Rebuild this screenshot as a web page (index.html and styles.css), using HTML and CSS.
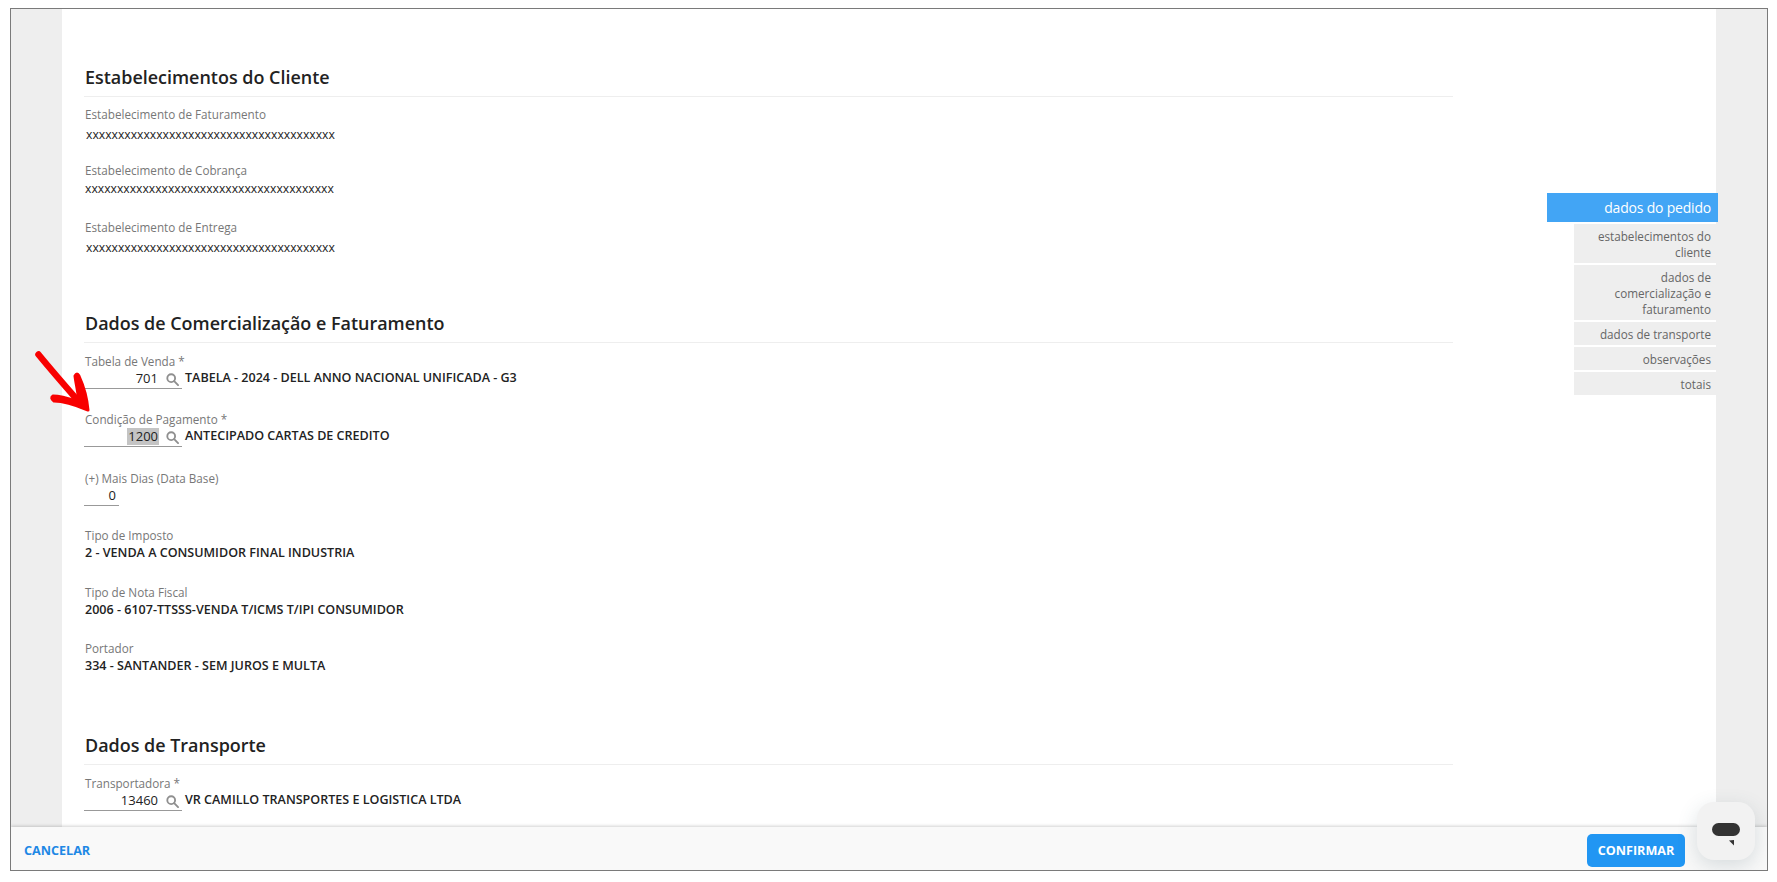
FILE: index.html
```html
<!DOCTYPE html>
<html lang="pt-BR">
<head>
<meta charset="utf-8">
<title>Dados do pedido</title>
<link rel="stylesheet" href="styles.css">
</head>
<body>
<div class="frame">
  <div class="scroller">
    <main class="sheet">
      <div class="content">
        <section class="sec sec-cliente">
          <h2 class="sec-title">Estabelecimentos do Cliente</h2>
          <div class="field f-est"><div class="lbl">Estabelecimento de Faturamento</div><div class="xval nudge">xxxxxxxxxxxxxxxxxxxxxxxxxxxxxxxxxxxxxxx</div></div>
          <div class="field f-est2"><div class="lbl">Estabelecimento de Cobrança</div><div class="xval">xxxxxxxxxxxxxxxxxxxxxxxxxxxxxxxxxxxxxxx</div></div>
          <div class="field f-est3"><div class="lbl">Estabelecimento de Entrega</div><div class="xval nudge">xxxxxxxxxxxxxxxxxxxxxxxxxxxxxxxxxxxxxxx</div></div>
        </section>
        <section class="sec sec-com">
          <h2 class="sec-title">Dados de Comercialização e Faturamento</h2>
          <div class="field f-lookup">
            <div class="lbl">Tabela de Venda *</div>
            <div class="lookup">
              <div class="inp"><span class="num">701</span><svg class="lens" viewBox="0 0 14 14"><circle cx="5.6" cy="5.6" r="4.2"/><path d="M8.8 8.8L13 13"/></svg></div>
              <span class="desc">TABELA - 2024 - DELL ANNO NACIONAL UNIFICADA - G3</span>
            </div>
          </div>
          <div class="field f-lookup2">
            <div class="lbl">Condição de Pagamento *</div>
            <div class="lookup">
              <div class="inp"><span class="num sel">1200</span><svg class="lens" viewBox="0 0 14 14"><circle cx="5.6" cy="5.6" r="4.2"/><path d="M8.8 8.8L13 13"/></svg></div>
              <span class="desc">ANTECIPADO CARTAS DE CREDITO</span>
            </div>
          </div>
          <div class="field f-lookup3">
            <div class="lbl">(+) Mais Dias (Data Base)</div>
            <div class="lookup"><div class="inp inp-short"><span class="num">0</span></div></div>
          </div>
          <div class="field f-ro f-ro1"><div class="lbl">Tipo de Imposto</div><div class="roval">2 - VENDA A CONSUMIDOR FINAL INDUSTRIA</div></div>
          <div class="field f-ro f-ro2"><div class="lbl">Tipo de Nota Fiscal</div><div class="roval">2006 - 6107-TTSSS-VENDA T/ICMS T/IPI CONSUMIDOR</div></div>
          <div class="field f-ro f-ro3"><div class="lbl">Portador</div><div class="roval">334 - SANTANDER - SEM JUROS E MULTA</div></div>
        </section>
        <section class="sec sec-tra">
          <h2 class="sec-title">Dados de Transporte</h2>
          <div class="field f-lookup">
            <div class="lbl">Transportadora *</div>
            <div class="lookup">
              <div class="inp"><span class="num">13460</span><svg class="lens" viewBox="0 0 14 14"><circle cx="5.6" cy="5.6" r="4.2"/><path d="M8.8 8.8L13 13"/></svg></div>
              <span class="desc">VR CAMILLO TRANSPORTES E LOGISTICA LTDA</span>
            </div>
          </div>
        </section>
      </div>
      <nav class="sidenav">
        <a class="nav-item nav-active">dados do pedido</a>
        <a class="nav-item">estabelecimentos do cliente</a>
        <a class="nav-item">dados de comercialização e faturamento</a>
        <a class="nav-item">dados de transporte</a>
        <a class="nav-item">observações</a>
        <a class="nav-item">totais</a>
      </nav>
    </main>
  </div>
  <footer class="footer">
    <a class="cancel">CANCELAR</a>
    <button class="confirm">CONFIRMAR</button>
  </footer>
  <svg class="arrow" viewBox="0 0 70 75"><path d="M4.5 3.5C18 20 32 36 46 52"/><path class="arrow-head" d="M19 45C28 45 36 48 45 51C44 41 42 33 41 25Q43 21 45 25C50 36 53 47 54 59C42 54 30 50 20 50Q16 47 19 45Z"/></svg>
  <div class="chat"><svg class="chat-icon" viewBox="0 0 28 23"><rect x="0" y="0" width="28" height="13" rx="6.5"/><path d="M17 17.5L22 17V22.5Z"/></svg></div>
</div>
</body>
</html>
```
FILE: styles.css
```css
* { box-sizing: border-box; }
html, body { height: 100%; }
body {
  margin: 0;
  padding: 8px 9px 11px 10px;
  background: #fff;
  font-family: "Open Sans", sans-serif;
  color: #222;
  overflow: hidden;
}
.frame {
  position: relative;
  height: 863px;
  border: 1px solid #7a7a7a;
  display: flex;
  flex-direction: column;
  overflow: hidden;
  background: #eee;
}
.scroller { flex: 1; min-height: 0; overflow: hidden; padding: 0 51px 0 51px; }
.sheet { position: relative; display: flex; height: 100%; background: #fff; padding-left: 22px; }
.content { width: 1369px; padding-top: 49px; flex: none; }
.sec-title {
  margin: 0;
  height: 39px;
  padding: 7px 0 0 1px;
  font-size: 17.95px;
  line-height: 24px;
  font-weight: 600;
  color: #222;
  border-bottom: 1px solid #eee;
}
.lbl { font-size: 11.7px; line-height: 16px; color: #777; padding-left: 1px; }
.f-est { margin-top: 9px; }
.f-est2 { margin-top: 18px; }
.f-est3 { margin-top: 21px; }
.xval { font-size: 12.2px; line-height: 18px; margin-top: 4px; color: #222; padding-left: 1px; }
.f-est2 .xval { margin-top: 2px; }
.f-est3 .xval { margin-top: 4px; }
.xval.nudge { padding-left: 2px; }
.sec-com { margin-top: 47px; }
.sec-tra { margin-top: 51px; }
.f-lookup { margin-top: 10px; }
.f-lookup2 { margin-top: 22px; }
.f-lookup3 { margin-top: 23px; }
.lookup { display: flex; align-items: center; height: 21px; margin-top: -1px; }
.inp {
  width: 98px;
  height: 21px;
  flex: none;
  border-bottom: 1px solid #999;
  display: flex;
  justify-content: flex-end;
  align-items: center;
  padding-right: 3px;
}
.inp-short { width: 35px; padding-right: 1px; }
.num { font-size: 13px; line-height: 17px; font-weight: 500; padding: 0 1px; margin-right: 7px; color: #222; }
.inp-short .num { margin-right: 1px; }
.sel { background: #c4c4c4; }
.lens { width: 13px; height: 13px; margin-top: 2px; fill: none; stroke: #8f8f8f; stroke-width: 2; stroke-linecap: round; }
.desc { margin-left: 3px; font-size: 12.55px; line-height: 17px; font-weight: 600; color: #222; position: relative; top: -1px; }
.f-ro1 { margin-top: 21px; }
.f-ro2 { margin-top: 22px; }
.f-ro3 { margin-top: 21px; }
.roval { font-size: 12.55px; line-height: 18px; margin-top: 1px; font-weight: 600; color: #222; padding-left: 1px; }
.sidenav {
  margin-left: 94px;
  margin-top: 184px;
  width: 171px;
  flex: none;
  display: flex;
  flex-direction: column;
  align-items: flex-end;
  gap: 2px;
}
.nav-item {
  display: block;
  width: 142px;
  margin-right: 2px;
  padding: 4px 5px 3px 10px;
  font-size: 11.7px;
  line-height: 16px;
  color: #666;
  background: #eee;
  text-align: right;
}
.nav-active {
  width: 171px;
  margin-right: 0;
  padding: 5px 7px 5px 10px;
  font-size: 14px;
  line-height: 19px;
  letter-spacing: -0.2px;
  color: #fff;
  background: #42a5f5;
}
.footer {
  flex: none;
  height: 43px;
  background: #f9f9f9;
  box-shadow: 0 -1px 3px rgba(0,0,0,.18);
  position: relative;
  display: flex;
  align-items: center;
  justify-content: space-between;
  padding: 0 82px 0 13px;
}
.cancel { font-size: 12.6px; font-weight: 700; color: #1e88e5; margin-top: 3px; }
.confirm {
  width: 98px;
  height: 33px;
  margin-top: 4px;
  border: 0;
  border-radius: 5px;
  background: #2196f3;
  color: #fff;
  font-family: inherit;
  font-size: 12.6px;
  font-weight: 700;
  padding: 0;
}
.arrow {
  position: absolute;
  left: 23px;
  top: 342px;
  width: 70px;
  height: 75px;
  fill: none;
  stroke: #f80000;
  stroke-width: 6.5;
  stroke-linecap: round;
}
.arrow-head { fill: #f80000; stroke-width: 3; stroke-linejoin: round; }
.chat {
  position: absolute;
  right: 12px;
  bottom: 10px;
  width: 58px;
  height: 58px;
  border-radius: 17px;
  background: #f2f2f2;
  box-shadow: 0 6px 20px rgba(60,90,100,.18);
  display: flex;
  align-items: center;
  justify-content: center;
}
.chat-icon { width: 28px; height: 23px; fill: #333; margin-top: 6px; }
```
